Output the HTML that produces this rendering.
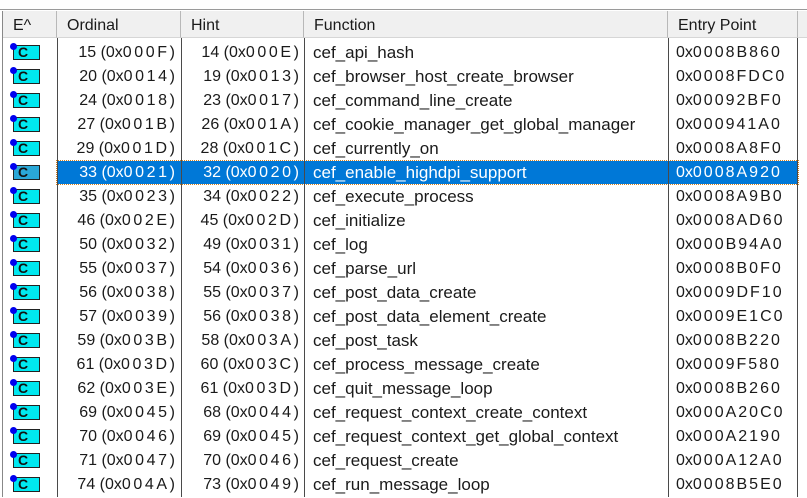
<!DOCTYPE html>
<html><head><meta charset="utf-8"><style>
*{margin:0;padding:0;box-sizing:border-box}
body{width:807px;height:497px;overflow:hidden;background:#fff;font-family:"Liberation Sans",sans-serif;font-size:16px;color:#1a1a1a;position:relative}
.top{position:absolute;left:0;top:0;width:807px;height:10px;background:#fff;border-bottom:1px solid #9a9a9a}
.hdr{position:absolute;top:11px;height:27px;background:#f0f0f0;border-right:1px solid #b8b8b8;border-bottom:1px solid #d6d6d6;line-height:29px;padding-left:10px;color:#1a1a1a;font-size:16px}
.vl{position:absolute;top:38px;bottom:0;width:1px;background:#4a4a4a}
.row{position:absolute;left:0;width:807px;height:24px;line-height:26px}
.row span{position:absolute;top:0;white-space:nowrap}
.o{right:632px}.h{right:508px}.f{left:313px;font-size:17px}.e{left:676px}
i{font-style:normal;letter-spacing:2.6px}
.e i{letter-spacing:2px}
.sel{background:#0078d7;color:#fff;left:57px;width:741px;top:161px;height:23px;position:absolute;outline:1px dotted #d08020}
.ic{position:absolute;left:13px;top:5px;width:27px;height:15px;background:#00e8f0;border:1px solid #222}
.ic b{position:absolute;left:4px;top:-2px;font:bold 14px "Liberation Sans",sans-serif;color:#111;line-height:16px}
.dot{position:absolute;left:10px;top:3px;width:7px;height:7px;border-radius:50%;background:#0000ee}
</style></head><body>
<div class="top"></div>
<div style="position:absolute;left:2px;top:11px;width:1px;height:486px;background:#888"></div>
<div class="hdr" style="left:3px;width:54px">E^</div>
<div class="hdr" style="left:57px;width:124px">Ordinal</div>
<div class="hdr" style="left:181px;width:123px">Hint</div>
<div class="hdr" style="left:304px;width:364px">Function</div>
<div class="hdr" style="left:668px;width:130px">Entry Point</div>
<div class="hdr" style="left:798px;width:9px"></div>
<div class="sel"></div>
<div class="vl" style="left:57px"></div>
<div class="vl" style="left:181px"></div>
<div class="vl" style="left:304px"></div>
<div class="vl" style="left:668px"></div>
<div class="vl" style="left:797px"></div>

<div class="row" style="top:40px"><div class="ic"><b>C</b></div><div class="dot"></div><span class="o">15 (0x<i>000F</i>)</span><span class="h">14 (0x<i>000E</i>)</span><span class="f">cef_api_hash</span><span class="e">0x<i>0008B860</i></span></div>
<div class="row" style="top:64px"><div class="ic"><b>C</b></div><div class="dot"></div><span class="o">20 (0x<i>0014</i>)</span><span class="h">19 (0x<i>0013</i>)</span><span class="f">cef_browser_host_create_browser</span><span class="e">0x<i>0008FDC0</i></span></div>
<div class="row" style="top:88px"><div class="ic"><b>C</b></div><div class="dot"></div><span class="o">24 (0x<i>0018</i>)</span><span class="h">23 (0x<i>0017</i>)</span><span class="f">cef_command_line_create</span><span class="e">0x<i>00092BF0</i></span></div>
<div class="row" style="top:112px"><div class="ic"><b>C</b></div><div class="dot"></div><span class="o">27 (0x<i>001B</i>)</span><span class="h">26 (0x<i>001A</i>)</span><span class="f">cef_cookie_manager_get_global_manager</span><span class="e">0x<i>000941A0</i></span></div>
<div class="row" style="top:136px"><div class="ic"><b>C</b></div><div class="dot"></div><span class="o">29 (0x<i>001D</i>)</span><span class="h">28 (0x<i>001C</i>)</span><span class="f">cef_currently_on</span><span class="e">0x<i>0008A8F0</i></span></div>
<div class="row" style="top:160px;color:#fff"><div class="ic" style="background:#2aa8d8"><b>C</b></div><div class="dot"></div><span class="o">33 (0x<i>0021</i>)</span><span class="h">32 (0x<i>0020</i>)</span><span class="f">cef_enable_highdpi_support</span><span class="e">0x<i>0008A920</i></span></div>
<div class="row" style="top:184px"><div class="ic"><b>C</b></div><div class="dot"></div><span class="o">35 (0x<i>0023</i>)</span><span class="h">34 (0x<i>0022</i>)</span><span class="f">cef_execute_process</span><span class="e">0x<i>0008A9B0</i></span></div>
<div class="row" style="top:208px"><div class="ic"><b>C</b></div><div class="dot"></div><span class="o">46 (0x<i>002E</i>)</span><span class="h">45 (0x<i>002D</i>)</span><span class="f">cef_initialize</span><span class="e">0x<i>0008AD60</i></span></div>
<div class="row" style="top:232px"><div class="ic"><b>C</b></div><div class="dot"></div><span class="o">50 (0x<i>0032</i>)</span><span class="h">49 (0x<i>0031</i>)</span><span class="f">cef_log</span><span class="e">0x<i>000B94A0</i></span></div>
<div class="row" style="top:256px"><div class="ic"><b>C</b></div><div class="dot"></div><span class="o">55 (0x<i>0037</i>)</span><span class="h">54 (0x<i>0036</i>)</span><span class="f">cef_parse_url</span><span class="e">0x<i>0008B0F0</i></span></div>
<div class="row" style="top:280px"><div class="ic"><b>C</b></div><div class="dot"></div><span class="o">56 (0x<i>0038</i>)</span><span class="h">55 (0x<i>0037</i>)</span><span class="f">cef_post_data_create</span><span class="e">0x<i>0009DF10</i></span></div>
<div class="row" style="top:304px"><div class="ic"><b>C</b></div><div class="dot"></div><span class="o">57 (0x<i>0039</i>)</span><span class="h">56 (0x<i>0038</i>)</span><span class="f">cef_post_data_element_create</span><span class="e">0x<i>0009E1C0</i></span></div>
<div class="row" style="top:328px"><div class="ic"><b>C</b></div><div class="dot"></div><span class="o">59 (0x<i>003B</i>)</span><span class="h">58 (0x<i>003A</i>)</span><span class="f">cef_post_task</span><span class="e">0x<i>0008B220</i></span></div>
<div class="row" style="top:352px"><div class="ic"><b>C</b></div><div class="dot"></div><span class="o">61 (0x<i>003D</i>)</span><span class="h">60 (0x<i>003C</i>)</span><span class="f">cef_process_message_create</span><span class="e">0x<i>0009F580</i></span></div>
<div class="row" style="top:376px"><div class="ic"><b>C</b></div><div class="dot"></div><span class="o">62 (0x<i>003E</i>)</span><span class="h">61 (0x<i>003D</i>)</span><span class="f">cef_quit_message_loop</span><span class="e">0x<i>0008B260</i></span></div>
<div class="row" style="top:400px"><div class="ic"><b>C</b></div><div class="dot"></div><span class="o">69 (0x<i>0045</i>)</span><span class="h">68 (0x<i>0044</i>)</span><span class="f">cef_request_context_create_context</span><span class="e">0x<i>000A20C0</i></span></div>
<div class="row" style="top:424px"><div class="ic"><b>C</b></div><div class="dot"></div><span class="o">70 (0x<i>0046</i>)</span><span class="h">69 (0x<i>0045</i>)</span><span class="f">cef_request_context_get_global_context</span><span class="e">0x<i>000A2190</i></span></div>
<div class="row" style="top:448px"><div class="ic"><b>C</b></div><div class="dot"></div><span class="o">71 (0x<i>0047</i>)</span><span class="h">70 (0x<i>0046</i>)</span><span class="f">cef_request_create</span><span class="e">0x<i>000A12A0</i></span></div>
<div class="row" style="top:472px"><div class="ic"><b>C</b></div><div class="dot"></div><span class="o">74 (0x<i>004A</i>)</span><span class="h">73 (0x<i>0049</i>)</span><span class="f">cef_run_message_loop</span><span class="e">0x<i>0008B5E0</i></span></div>
</body></html>
